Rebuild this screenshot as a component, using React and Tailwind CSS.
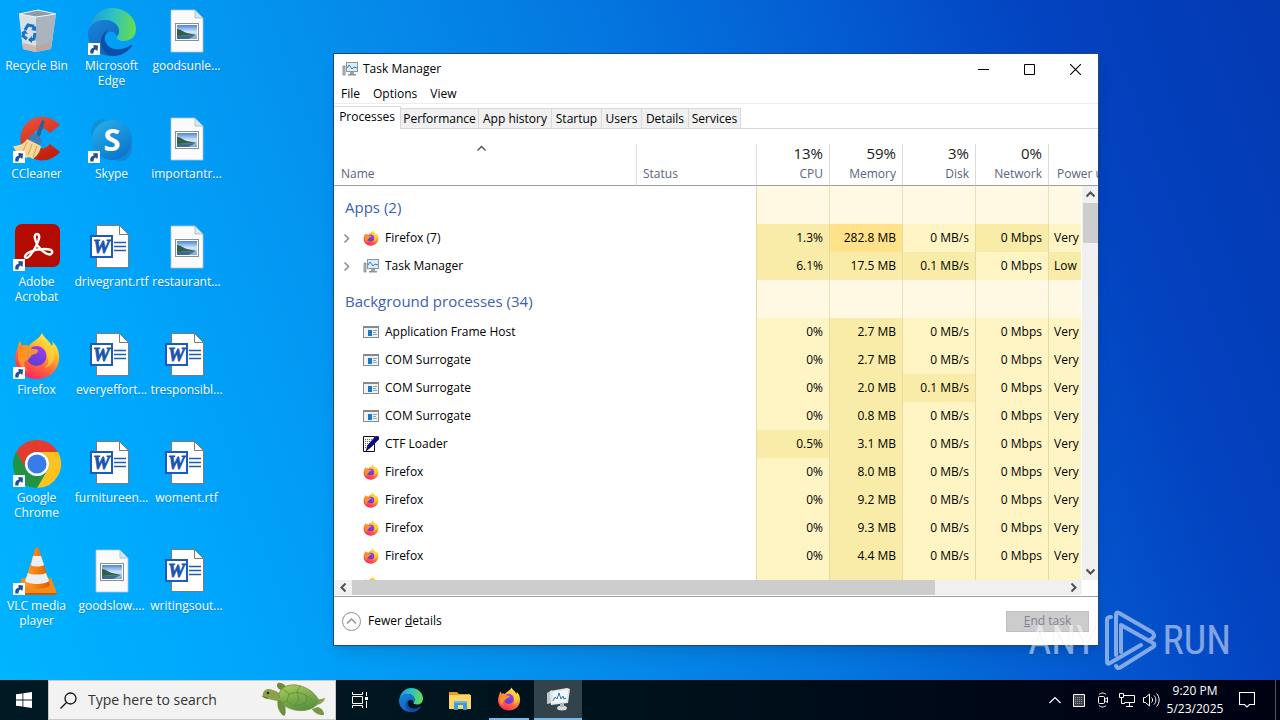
import { useState } from "react";

function Defs() {
  return (
    <svg className="absolute w-0 h-0" aria-hidden="true">
      <defs>
        <linearGradient id="fxBody" x1="0.8" y1="0" x2="0.25" y2="1">
          <stop offset="0.05" stopColor="#fff44f" />
          <stop offset="0.35" stopColor="#ffb52a" />
          <stop offset="0.6" stopColor="#ff7139" />
          <stop offset="0.85" stopColor="#ff3b52" />
          <stop offset="1" stopColor="#f0206b" />
        </linearGradient>
        <linearGradient id="fxGlobe" x1="0.7" y1="0" x2="0.3" y2="1">
          <stop offset="0" stopColor="#a03af0" />
          <stop offset="1" stopColor="#5a3fd0" />
        </linearGradient>
        <linearGradient id="fxHead" x1="0" y1="0" x2="1" y2="1">
          <stop offset="0" stopColor="#ff8a1e" />
          <stop offset="1" stopColor="#ffb030" />
        </linearGradient>
        <linearGradient id="edgeTop" x1="0" y1="0.4" x2="1" y2="0.5">
          <stop offset="0" stopColor="#2196dd" />
          <stop offset="0.45" stopColor="#2bc0c8" />
          <stop offset="1" stopColor="#66dd50" />
        </linearGradient>
        <linearGradient id="edgeLeft" x1="0" y1="0" x2="0.6" y2="1">
          <stop offset="0" stopColor="#1a86d8" />
          <stop offset="1" stopColor="#0f62bd" />
        </linearGradient>
        <linearGradient id="skypeBg" x1="0" y1="0" x2="0.6" y2="1">
          <stop offset="0" stopColor="#2ab1ea" />
          <stop offset="1" stopColor="#0a78cf" />
        </linearGradient>
        <linearGradient id="ccRed" x1="0" y1="0" x2="0.4" y2="1">
          <stop offset="0" stopColor="#f0543c" />
          <stop offset="1" stopColor="#c4200f" />
        </linearGradient>
        <linearGradient id="cone" x1="0" y1="0" x2="1" y2="0">
          <stop offset="0" stopColor="#f9a03a" />
          <stop offset="0.45" stopColor="#f58212" />
          <stop offset="1" stopColor="#d95e00" />
        </linearGradient>
        <linearGradient id="photoSky" x1="0" y1="0" x2="0" y2="1">
          <stop offset="0" stopColor="#4a86d8" />
          <stop offset="0.5" stopColor="#d5e8f6" />
          <stop offset="1" stopColor="#6fa6cf" />
        </linearGradient>
        <linearGradient id="shell" x1="0" y1="0" x2="0.4" y2="1">
          <stop offset="0" stopColor="#a9cf5c" />
          <stop offset="1" stopColor="#5c9440" />
        </linearGradient>
      </defs>
    </svg>
  );
}

function FirefoxIcon({ size = 48 }) {
  return (
    <svg width={size} height={size} viewBox="0 0 48 48">
      <path
        d="M29 1c2 5 7 7 10 13 1-2 1-3 0-5 5 5 8 11 7 19-1 11-10 19-22 19C11 47 2 38 2 26c0-5 2-8 3-12 0-2 1-4 3-5 0 2 0 3 1 5 2-1 5-1 7 0 3-5 10-6 13-13z"
        fill="url(#fxBody)"
      />
      <circle cx="23.500" cy="24" r="10" fill="url(#fxGlobe)" />
      <path
        d="M5 16c2-3 7-4 11-2 1 1 2 3 4 3 3 0 5 0 5 2s-3 3-6 4c-2 2-3 5-7 6-2 3 0 8 4 10C8 37 4 30 5 22z"
        fill="url(#fxHead)"
        opacity="0.9"
      />
      <path d="M27 12c5 2 8 7 7 13 3 4 1 9-3 11 8-2 12-9 10-17-1-4-5-7-7-11-1 3-3 4-7 4z" fill="#ffd43a" opacity="0.75" />
    </svg>
  );
}

function EdgeIcon({ size = 48 }) {
  return (
    <svg width={size} height={size} viewBox="0 0 48 48">
      <path
        d="M1 22C3 8 13 0 24 0c14 0 24 10 24 21 0 8-6 12-12 12-5 0-8-2-7-4 2-2 2-4 2-6 0-6-6-11-13-11C10 12 4 16 1 22z"
        fill="url(#edgeTop)"
      />
      <path
        d="M0 26c0-8 7-14 17-14 8 0 14 5 14 11 0 2-1 4-2 5-3-7-12-5-12 3 0 8 8 13 16 13-3 3-6 4-9 4C10 48 0 38 0 26z"
        fill="url(#edgeLeft)"
      />
      <path
        d="M21 21c-4 3-6 9-3 14 4 7 15 9 25 2 1 0 2 0 1 1-4 6-11 10-19 10-8-1-13-8-12-16 1-5 4-9 8-11z"
        fill="#0d4ea6"
      />
    </svg>
  );
}

function RecycleIcon() {
  return (
    <svg width="48" height="48" viewBox="0 0 48 48">
      <path d="M6 6l19-4 18 4-5 35-15 3-13-3z" fill="#c9d3da" />
      <path d="M6 6l17 3v35l-13-3z" fill="#d9e0e5" />
      <path d="M23 9l20-3-5 35-15 3z" fill="#aab4bd" />
      <path d="M6 6l19-4 18 4-20 3z" fill="#8e9aa5" stroke="#eef3f6" strokeWidth="1.200" />
      <path d="M10 35l13 3 15-3-1 6-14 3-13-3z" fill="#c99c8b" opacity="0.6" />
      <g fill="none" stroke="#1673c8" strokeWidth="3">
        <path d="M12 22l3-5 5 1 1 3" />
        <path d="M22 25l-1 6-4 1" />
        <path d="M14 31l-4-3 1-4" />
      </g>
      <path d="M18 22l5 1 0-5zM19 28l-4 4 4 3zM8 25l4-3 3 4z" fill="#1673c8" />
    </svg>
  );
}

function CCleanerIcon() {
  return (
    <svg width="48" height="48" viewBox="0 0 48 48">
      <path
        d="M47 9C37-2 20-2 12 9c-8 11-5 26 5 32 10 6 22 4 30-5L37 28c-4 5-10 6-14 2-5-5-4-13 1-16 4-3 9-2 13 3z"
        fill="url(#ccRed)"
      />
      <path d="M29 4l3 1-7 21-4-2z" fill="#2b5f97" />
      <path d="M17 19c4-2 10 0 12 5l-2 7-12-6z" fill="#3d7db8" />
      <path d="M14 23l14 7c-1 6-4 10-8 13l-4-2-3 1-4-4-5-1-4-7c6 0 11-2 14-7z" fill="#f6d89a" />
      <path d="M14 26l-4 9M19 28l-4 11M24 30l-4 11" stroke="#dcae62" strokeWidth="1.200" />
    </svg>
  );
}

function SkypeIcon() {
  return (
    <svg width="48" height="48" viewBox="0 0 48 48">
      <circle cx="15" cy="15" r="12" fill="#1190dc" />
      <circle cx="32" cy="33" r="12" fill="#1486d8" />
      <circle cx="24" cy="24" r="20" fill="url(#skypeBg)" />
      <text x="24" y="35" textAnchor="middle" fontFamily="Open Sans" fontWeight="700" fontSize="31" fill="#fff">
        S
      </text>
    </svg>
  );
}

function AcrobatIcon() {
  return (
    <svg width="48" height="48" viewBox="0 0 48 48">
      <rect x="2" y="0" width="45" height="43" rx="7" fill="#b30b00" />
      <path
        d="M12 33c0-4 9-8 19-8 6 0 9 1 8 4-2 4-10-1-14-7-3-5-5-12-1-12s2 7-2 14c-4 7-8 12-10 9z"
        fill="none"
        stroke="#fff"
        strokeWidth="2.400"
        strokeLinejoin="round"
      />
    </svg>
  );
}

function ChromeIcon() {
  return (
    <svg width="48" height="48" viewBox="0 0 48 48">
      <path d="M24 12h20.800A24 24 0 0 0 3.200 12l10.400 18A12 12 0 0 1 24 12z" fill="#e33b2e" />
      <path d="M44.800 12H24a12 12 0 0 1 10.400 18L24 48a24 24 0 0 0 20.800-36z" fill="#fcc31e" />
      <path d="M3.200 12A24 24 0 0 0 24 48l10.400-18a12 12 0 0 1-20.800 0z" fill="#229342" />
      <circle cx="24" cy="24" r="12" fill="#fff" />
      <circle cx="24" cy="24" r="9.600" fill="#3a7bea" />
    </svg>
  );
}

function VlcIcon() {
  return (
    <svg width="48" height="48" viewBox="0 0 48 48">
      <path d="M9 30h29l6 15c0 1-1 2-2 2H5c-1 0-2-1-1-2z" fill="#f48b1b" />
      <path d="M4 45h40c0 1-1 2-2 2H5z" fill="#c95c04" />
      <path d="M24 0c1 0 2 0 2 1l11 36c-3 5-22 5-26 0L22 1c0-1 1-1 2-1z" fill="url(#cone)" />
      <path d="M20 8h8l3 9c-3 2-11 2-13 0z" fill="#eceff1" />
      <path d="M15 25c4 2 14 2 18 0l3 8c-4 4-20 4-24 0z" fill="#eceff1" />
    </svg>
  );
}

function PhotoFileIcon() {
  return (
    <svg width="48" height="48" viewBox="0 0 48 48">
      <path d="M8 2h24l8 8v34H8z" fill="#fbfbfb" stroke="#b7c3cb" strokeWidth="0.800" />
      <path d="M32 2v8h8z" fill="#d6ebf7" stroke="#9db9c8" strokeWidth="0.800" />
      <rect x="12.500" y="15.500" width="23" height="17" fill="#fff" stroke="#8a8f96" />
      <rect x="14" y="17" width="20" height="14" fill="url(#photoSky)" />
      <path d="M14 21c4 0 6 3 10 4l9 2-19 1z" fill="#2f5f4a" />
      <path d="M14 28l19-1-8 4H14z" fill="#3b6a8a" />
    </svg>
  );
}

function WordFileIcon() {
  return (
    <svg width="48" height="48" viewBox="0 0 48 48">
      <path d="M8.500 1.500h23l9 9v33h-32z" fill="#fff" stroke="#7b7b7b" />
      <path d="M31.500 1.500v9h9z" fill="#fff" stroke="#7b7b7b" />
      <path d="M26 18.500h12M26 22.500h12M26 26.500h12" stroke="#1f5fae" strokeWidth="1.300" />
      <rect x="3" y="12" width="21" height="21" fill="#fff" stroke="#1a5bbd" strokeWidth="2" />
      <text
        x="13.500"
        y="29"
        textAnchor="middle"
        fontFamily="Liberation Serif"
        fontStyle="italic"
        fontWeight="700"
        fontSize="19"
        fill="#1a53b0"
        stroke="#1a53b0"
        strokeWidth="0.800"
      >
        W
      </text>
    </svg>
  );
}

function ShortcutArrow() {
  return (
    <svg className="absolute left-0 bottom-px" width="12" height="12" viewBox="0 0 12 12">
      <rect width="12" height="12" fill="#fff" />
      <path d="M2.500 10.500C1.500 7 3.500 5 5.500 5V2l4.500.500-.500 5.500-2-1.500C6 7 5.500 8.500 5.500 10.500z" fill="#1f4f92" />
    </svg>
  );
}

function TaskManagerIcon() {
  return (
    <svg width="16" height="16" viewBox="0 0 16 16">
      <path d="M1 5h2v9H1z" fill="#b8bcc0" stroke="#7f8589" strokeWidth="0.800" />
      <rect x="4.500" y="1.500" width="11" height="9" fill="#d8eefa" stroke="#8d969c" />
      <path d="M5 7l2-3 3 4 2-2 3 1" fill="none" stroke="#2c7fb4" />
      <path d="M8 11h4v2H8z" fill="#9ea4a8" />
      <path d="M6 13h8v1.500H6z" fill="#8d9397" />
    </svg>
  );
}

function AppWindowIcon() {
  return (
    <svg width="16" height="16" viewBox="0 0 16 16">
      <rect x="0.500" y="2.500" width="15" height="11" fill="#f1f1f1" stroke="#848a90" />
      <path d="M0 2h16v2H0z" fill="#848a90" />
      <path d="M5 6h4v6H5z" fill="#1b78c8" />
      <path d="M10 6.500h4M10 8.500h3M10 10.500h4" stroke="#7ea6c4" />
    </svg>
  );
}

function CtfIcon() {
  return (
    <svg width="16" height="16" viewBox="0 0 16 16">
      <path d="M.5.500h11v15H.5z" fill="#fff" stroke="#111" />
      <path d="M2 3.500h8M2 5.500h7M2 7.500h6M2 9.500h4M2 11.500h3" stroke="#666" strokeDasharray="1 1" />
      <path d="M13 0l3 1v2L8 11l-5 4 2-6z" fill="#0b0b8c" stroke="#000033" strokeWidth="0.600" />
    </svg>
  );
}

function Turtle() {
  return (
    <svg width="66" height="36" viewBox="0 0 66 36">
      <path d="M20 8c-4-1-5-5-3-7 4-1 9 3 9 7z" fill="#6e8a3a" />
      <path d="M57 25c5 2 6 5 6 8-5 1-11-3-12-6z" fill="#7b9642" />
      <path d="M54 18c4-1 8-1 10-2 0 3-4 6-8 7z" fill="#88a549" />
      <path d="M17 17c-2 6 1 14 6 17 3-1 1-9 1-14z" fill="#6f8e3e" />
      <path d="M2 11c1-4 6-5 10-3 4 1 7 3 9 7l-5 4c-3-1-6-1-9-2-3 0-6-2-5-6z" fill="#8aa24b" />
      <circle cx="7" cy="11" r="1.300" fill="#20240f" />
      <path d="M1 14c2 1 4 2 6 2" stroke="#5a6a2c" fill="none" />
      <path d="M18 12C20 4 30 1 40 4c9 3 15 8 18 15-3 8-14 11-24 9-9-2-16-7-16-16z" fill="url(#shell)" stroke="#6d9440" strokeWidth="0.800" />
      <g fill="none" stroke="#5f8c3b" strokeWidth="0.800">
        <path d="M22 7l6 5 8-2 9 3 7 6M28 12l-2 7 7 5 9-2 7 4M36 10l2 7-5 7M45 13l1 7-4 2M26 19l-5 2M36 10l3-6" />
      </g>
    </svg>
  );
}

function FolderIcon() {
  return (
    <svg width="24" height="24" viewBox="0 0 24 24">
      <path d="M1 4h8l2 2h11v15H1z" fill="#e5a019" />
      <path d="M1 7h22v14H1z" fill="#fcd667" />
      <path d="M6 13h13v9h-4v-5h-5v5H6z" fill="#3d9cd8" />
      <path d="M6 13h13v2H6z" fill="#64b9ec" />
    </svg>
  );
}

function TaskManagerLarge() {
  return (
    <svg width="24" height="24" viewBox="0 0 24 24">
      <path d="M1 6l5-3v13l-5 1z" fill="#c5c8ca" />
      <path d="M4 4l17-3 3 1-2 14-17 2z" fill="#e4e7e8" />
      <path d="M7 5l15-2-2 12-13 1z" fill="#f3f7f9" />
      <path d="M7 14l2-4 2 2 2-6 2 6 2-3 1 3 2-1" fill="none" stroke="#2a76ab" />
      <ellipse cx="16" cy="21" rx="5" ry="2.500" fill="#d5d8da" />
      <path d="M14 16h4v4h-4z" fill="#b5b9bc" />
    </svg>
  );
}

const desktopItems = [
  { label: "Recycle Bin", icon: RecycleIcon },
  { label: "CCleaner", icon: CCleanerIcon, shortcut: true },
  { label: "Adobe Acrobat", icon: AcrobatIcon, shortcut: true },
  { label: "Firefox", icon: FirefoxIcon, shortcut: true },
  { label: "Google Chrome", icon: ChromeIcon, shortcut: true },
  { label: "VLC media player", icon: VlcIcon, shortcut: true },
  { label: "Microsoft Edge", icon: EdgeIcon, shortcut: true },
  { label: "Skype", icon: SkypeIcon, shortcut: true },
  { label: "drivegrant.rtf", icon: WordFileIcon },
  { label: "everyeffort...", icon: WordFileIcon },
  { label: "furnitureen...", icon: WordFileIcon },
  { label: "goodslow....", icon: PhotoFileIcon },
  { label: "goodsunle...", icon: PhotoFileIcon },
  { label: "importantr...", icon: PhotoFileIcon },
  { label: "restaurant...", icon: PhotoFileIcon },
  { label: "tresponsibl...", icon: WordFileIcon },
  { label: "woment.rtf", icon: WordFileIcon },
  { label: "writingsout...", icon: WordFileIcon },
];

const tabs = [
  { name: "Performance", width: "w-[78px]" },
  { name: "App history", width: "w-[73px]" },
  { name: "Startup", width: "w-[50px]" },
  { name: "Users", width: "w-[40px]" },
  { name: "Details", width: "w-[47px]" },
  { name: "Services", width: "w-[52px]" },
];

const columns = [
  { total: "13%", name: "CPU" },
  { total: "59%", name: "Memory" },
  { total: "3%", name: "Disk" },
  { total: "0%", name: "Network" },
];

// heat: one digit for each of CPU, memory, disk, network and power
const groups = [
  {
    title: "Apps (2)",
    rows: [
      { name: "Firefox (7)", icon: "firefox", open: true, values: ["1.3%", "282.8 MB", "0 MB/s", "0 Mbps", "Very"], heat: "12010" },
      { name: "Task Manager", icon: "taskmgr", open: true, values: ["6.1%", "17.5 MB", "0.1 MB/s", "0 Mbps", "Low"], heat: "11101" },
    ],
  },
  {
    title: "Background processes (34)",
    rows: [
      { name: "Application Frame Host", icon: "window", values: ["0%", "2.7 MB", "0 MB/s", "0 Mbps", "Very"], heat: "01000" },
      { name: "COM Surrogate", icon: "window", values: ["0%", "2.7 MB", "0 MB/s", "0 Mbps", "Very"], heat: "01000" },
      { name: "COM Surrogate", icon: "window", values: ["0%", "2.0 MB", "0.1 MB/s", "0 Mbps", "Very"], heat: "01100" },
      { name: "COM Surrogate", icon: "window", values: ["0%", "0.8 MB", "0 MB/s", "0 Mbps", "Very"], heat: "01000" },
      { name: "CTF Loader", icon: "ctf", values: ["0.5%", "3.1 MB", "0 MB/s", "0 Mbps", "Very"], heat: "11000" },
      { name: "Firefox", icon: "firefox", values: ["0%", "8.0 MB", "0 MB/s", "0 Mbps", "Very"], heat: "01000" },
      { name: "Firefox", icon: "firefox", values: ["0%", "9.2 MB", "0 MB/s", "0 Mbps", "Very"], heat: "01000" },
      { name: "Firefox", icon: "firefox", values: ["0%", "9.3 MB", "0 MB/s", "0 Mbps", "Very"], heat: "01000" },
      { name: "Firefox", icon: "firefox", values: ["0%", "4.4 MB", "0 MB/s", "0 Mbps", "Very"], heat: "01000" },
      { name: "", icon: "firefox", values: ["", "", "", "", ""], heat: "01000" },
    ],
  },
];

const heatColors = {
  0: "bg-[#fff4c4]",
  1: "bg-[#f9eca8]",
  2: "bg-[#ffe28a]",
};

function RowIcon({ type }) {
  if (type === "firefox") return <FirefoxIcon size={16} />;
  if (type === "taskmgr") return <TaskManagerIcon />;
  if (type === "ctf") return <CtfIcon />;
  return <AppWindowIcon />;
}

function Chevron({ d, color = "#505050", width = 2 }) {
  return (
    <svg width="9" height="9" viewBox="0 0 9 9">
      <path d={d} fill="none" stroke={color} strokeWidth={width} />
    </svg>
  );
}

const UP = "M.5 6.500l4-4 4 4";
const DOWN = "M.5 2.500l4 4 4-4";
const LEFT = "M6.500.500l-4 4 4 4";
const RIGHT = "M2.500.500l4 4-4 4";

function ProcessTable() {
  return (
    <table className="w-full table-fixed border-separate border-spacing-0 mt-[15px]">
      <colgroup>
        <col className="w-[303px]" />
        <col className="w-[120px]" />
        <col className="w-[73px]" />
        <col className="w-[73px]" />
        <col className="w-[73px]" />
        <col className="w-[73px]" />
        <col />
      </colgroup>
      <thead>
        <tr className="h-[42px] text-left text-[#596480]">
          <th className="p-0 font-normal align-top border-r border-[#dcdcdc] border-b border-b-[#a0a0a0]">
            <div className="flex justify-center h-[21px] -ml-2">
              <Chevron d={UP} width={1.300} />
            </div>
            <div className="pl-[7px] leading-[18px]">Name</div>
          </th>
          <th className="p-0 pt-[21px] pl-[6px] leading-[18px] font-normal align-top border-r border-[#dcdcdc] border-b border-b-[#a0a0a0]">
            Status
          </th>
          {columns.map((c) => (
            <th
              key={c.name}
              className="p-0 pr-[6px] font-normal text-right align-top border-r border-[#dcdcdc] border-b border-b-[#a0a0a0]"
            >
              <div className="text-[15px] leading-[18px] pb-[3px] text-[#1a1a1a]">{c.total}</div>
              <div className="leading-[18px]">{c.name}</div>
            </th>
          ))}
          <th className="p-0 pt-[21px] pl-2 leading-[18px] font-normal align-top whitespace-nowrap border-b border-b-[#a0a0a0]">
            Power usage
          </th>
        </tr>
      </thead>
      {groups.map((g) => (
        <tbody key={g.title}>
          <tr className="h-[38px]">
            <th colSpan={2} className="p-0 pl-[11px] pb-1 font-normal text-left text-[15px] text-[#3a61b5] pt-2 leading-[26px] border-r border-[#e6d9a2]">
              {g.title}
            </th>
            {columns.map((c) => (
              <td key={c.name} className="p-0 bg-[#fff9e3] border-r border-[#e9dfb8]" />
            ))}
            <td className="p-0 bg-[#fff9e3]" />
          </tr>
          {g.rows.map((r, idx) => (
            <tr key={idx} className="h-7">
              <td className="p-0">
                <div className="flex items-center h-7 pl-2">
                  <span className="w-[21px] flex">{r.open && <Chevron d={RIGHT} color="#8c8c8c" width={1.500} />}</span>
                  <RowIcon type={r.icon} />
                  <span className="pl-[6px]">{r.name}</span>
                </div>
              </td>
              <td className="p-0 border-r border-[#e6d9a2]" />
              {r.values.map((v, i) => (
                <td
                  key={i}
                  className={`p-0 whitespace-nowrap ${heatColors[r.heat[i]]} ${
                    i < 4 ? "pr-[6px] text-right border-r border-[#e6d9a2]" : "pl-[5px]"
                  }`}
                >
                  {v}
                </td>
              ))}
            </tr>
          ))}
        </tbody>
      ))}
    </table>
  );
}

function TaskManagerWindow() {
  const [active, setActive] = useState("Processes");

  return (
    <section className="absolute left-[333px] top-[53px] bottom-[34px] w-[766px] flex flex-col bg-white border border-[#1b4a78] text-xs text-black shadow-lg overflow-hidden">
      <header className="flex items-center h-[30px] shrink-0 pl-2">
        <TaskManagerIcon />
        <h1 className="pl-[5px] flex-1">Task Manager</h1>
        <button aria-label="Minimize" className="w-[46px] h-full grid place-items-center">
          <svg width="11" height="11" viewBox="0 0 11 11"><path d="M0 5.500h11" stroke="#000" /></svg>
        </button>
        <button aria-label="Maximize" className="w-[46px] h-full grid place-items-center">
          <svg width="11" height="11" viewBox="0 0 11 11"><path d="M.5.500h10v10H.5z" fill="none" stroke="#000" /></svg>
        </button>
        <button aria-label="Close" className="w-[46px] h-full grid place-items-center">
          <svg width="11" height="11" viewBox="0 0 11 11"><path d="M0 0l11 11M11 0L0 11" stroke="#000" strokeWidth="1.100" /></svg>
        </button>
      </header>

      <nav className="flex gap-[13px] h-5 shrink-0 pl-[7px] border-b border-[#ececec]">
        <button>File</button>
        <button>Options</button>
        <button>View</button>
      </nav>

      <div role="tablist" className="flex items-end h-[25px] shrink-0 border-b border-[#d9d9d9]">
        <button
          role="tab"
          aria-selected={active === "Processes"}
          onClick={() => setActive("Processes")}
          className="w-[67px] h-[23px] -mb-px pb-[2px] bg-white border-r border-t border-[#d9d9d9] whitespace-nowrap"
        >
          Processes
        </button>
        {tabs.map((t) => (
          <button
            key={t.name}
            role="tab"
            aria-selected={active === t.name}
            onClick={() => setActive(t.name)}
            className={`${t.width} h-5 flex justify-center items-center bg-[#f0f0f0] border-r border-t border-[#d9d9d9] whitespace-nowrap`}
          >
            {t.name}
          </button>
        ))}
      </div>

      <div className="relative flex-1 min-h-0 overflow-hidden">
        <ProcessTable />
        {/* vertical scroll bar */}
        <div className="absolute right-0 top-[57px] bottom-0 w-[17px] flex flex-col items-center bg-[#f0f0f0] border-l border-white">
          <button aria-label="Scroll up" className="h-[17px] grid place-items-center"><Chevron d={UP} /></button>
          <div className="w-[15px] h-10 bg-[#cdcdcd]" />
          <div className="flex-1" />
          <button aria-label="Scroll down" className="h-[17px] grid place-items-center"><Chevron d={DOWN} /></button>
        </div>
      </div>

      <div className="flex items-start h-[17px] shrink-0 pr-4 border-b border-[#a0a0a0]">
        <button aria-label="Scroll left" className="w-[18px] h-[15px] grid place-items-center bg-[#f0f0f0]"><Chevron d={LEFT} /></button>
        <div className="flex-1 h-[15px] flex bg-[#f0f0f0]">
          <div className="w-9/11 bg-[#cdcdcd]" />
        </div>
        <button aria-label="Scroll right" className="w-[18px] h-[15px] grid place-items-center bg-[#f0f0f0]"><Chevron d={RIGHT} /></button>
      </div>

      <footer className="flex items-center justify-between h-12 shrink-0 pl-2 pr-[9px]">
        <button className="flex items-center gap-[7px]">
          <svg width="19" height="19" viewBox="0 0 19 19" fill="none" stroke="#8f8f8f">
            <circle cx="9.500" cy="9.500" r="9" />
            <path d="M5 11.500l4.500-4.500 4.500 4.500" strokeWidth="1.400" />
          </svg>
          <span>Fewer <u>d</u>etails</span>
        </button>
        <button disabled className="w-[83px] h-[21px] bg-[#cccccc] border border-[#bfbfbf] text-[#838398]">
          <u>E</u>nd task
        </button>
      </footer>
    </section>
  );
}

function Watermark() {
  return (
    <div className="absolute right-[49px] bottom-2 flex items-center gap-[6px] text-white opacity-50 pointer-events-none">
      <span className="font-['Roboto_Condensed','Liberation_Sans_Narrow','Roboto',sans-serif] text-[40px] leading-none text-shadow-xs">ANY</span>
      <svg width="54" height="62" viewBox="0 0 54 62" fill="none" stroke="currentColor" strokeWidth="4" strokeLinejoin="round" strokeLinecap="round">
        <path d="M8 7c-3 0-4 1-4 3v42c0 2 1 2 3 1l31-18" />
        <path d="M13 45V5c0-2 1-3 3-2l33 19c3 2 3 5-1 7" />
        <path d="M18 42V15l32 18c2 1 2 3 0 4L18 57c-3 2-4 1-5-1" />
      </svg>
      <span className="font-['Roboto_Condensed','Liberation_Sans_Narrow','Roboto',sans-serif] text-[40px] leading-none">RUN</span>
    </div>
  );
}

function Taskbar() {
  return (
    <footer className="flex h-10 shrink-0 text-white text-xs bg-linear-to-r from-[#001a24] via-[#00121c] to-[#000212]">
      <button aria-label="Start" className="w-12 grid place-items-center">
        <svg width="16" height="16" viewBox="0 0 16 16" fill="#fff">
          <path d="M0 2.300L6.500 1.400v6.200H0zM7.300 1.300L16 0v7.600H7.300zM0 8.400h6.500v6.200L0 13.700zM7.300 8.400H16V16l-8.700-1.300z" />
        </svg>
      </button>
      <label className="flex items-center w-72 bg-[#f2f2f2] border border-[#c8c8c8] pl-[11px] pr-2">
        <svg width="17" height="17" viewBox="0 0 17 17" fill="none" stroke="#111" strokeWidth="1.300">
          <circle cx="10.500" cy="6.500" r="5.500" />
          <path d="M6.500 10.500L0.500 16.500" />
        </svg>
        <input
          type="text"
          aria-label="Search"
          placeholder="Type here to search"
          className="flex-1 min-w-0 ml-[11px] text-sm outline-none text-black placeholder:text-[#333333]"
        />
        <Turtle />
      </label>
      <button aria-label="Task View" className="w-12 grid place-items-center">
        <svg width="18" height="18" viewBox="0 0 18 18" fill="none" stroke="#fff">
          <path d="M1.500 1v2.500h10V1M1.500 17v-2.500h10V17M1.500 5.500h10v7h-10zM15.500 1v4M15.500 10v7" />
          <path d="M14 6h3v3h-3z" fill="#fff" stroke="none" />
        </svg>
      </button>
      <div className="flex gap-px ml-[3px]">
        <button aria-label="Edge" className="w-12 grid place-items-center"><EdgeIcon size={24} /></button>
        <button aria-label="File Explorer" className="w-12 grid place-items-center"><FolderIcon /></button>
        <button aria-label="Firefox" className="w-12 flex flex-col items-center">
          <span className="flex-1 flex items-center"><FirefoxIcon size={24} /></span>
          <span className="w-10 h-[2px] bg-[#76b9ed]" />
        </button>
        <button aria-label="Task Manager" className="w-12 flex flex-col items-center bg-[#33434c]">
          <span className="flex-1 flex items-center"><TaskManagerLarge /></span>
          <span className="w-12 h-[2px] bg-[#76b9ed]" />
        </button>
      </div>

      <div className="flex items-center ml-auto">
        <button aria-label="Show hidden icons" className="w-6 grid place-items-center">
          <svg width="12" height="8" viewBox="0 0 12 8" fill="none" stroke="#fff" strokeWidth="1.200"><path d="M0.500 7L6 1.500 11.500 7" /></svg>
        </button>
        <span className="w-6 grid place-items-center">
          <svg width="12" height="13" viewBox="0 0 12 13">
            <path d="M.5.500h11v12H.5z" fill="#3a4048" stroke="#fff" />
            <path d="M2 3.500h8M2 5.500h8M2 7.500h8M2 9.500h8" stroke="#9a9fa6" strokeDasharray="1 1" />
          </svg>
        </span>
        <span className="w-6 grid place-items-center">
          <svg width="12" height="16" viewBox="0 0 12 16" fill="none" stroke="#fff">
            <rect x="1.500" y="4.500" width="6" height="7" rx="1" />
            <path d="M7.500 7.500l3-2v5l-3-2M2 2.500c2-2 5-2 7 0M2 13.500c2 2 5 2 7 0" />
          </svg>
        </span>
        <span className="w-6 grid place-items-center">
          <svg width="16" height="14" viewBox="0 0 16 14" fill="none" stroke="#fff">
            <path d="M5 2.500h10.500v7H5.500M10.500 10v3M7 13.500h7M.5.500h4v4h-4zM2.500 5v5.500H6" />
          </svg>
        </span>
        <span className="w-6 grid place-items-center">
          <svg width="17" height="14" viewBox="0 0 17 14" fill="none" stroke="#fff">
            <path d="M.5 4.500h2l4-3.500v12l-4-3.500h-2zM8.500 4.500c1.500 1.500 1.500 3.500 0 5M11 2.500c2.500 2.500 2.500 6.500 0 9M13.500.500c3.500 3.500 3.500 9.500 0 13" />
          </svg>
        </span>
        <div className="w-16 text-center leading-[18px] whitespace-nowrap">
          <div>9:20 PM</div>
          <div>5/23/2025</div>
        </div>
        <button aria-label="Notifications" className="w-10 grid place-items-center">
          <svg width="16" height="16" viewBox="0 0 16 16" fill="none" stroke="#fff" strokeWidth="1.100">
            <path d="M.5.500h15v12h-5L8 15l-2.500-2.500h-5z" />
          </svg>
        </button>
        <button aria-label="Show desktop" className="ml-2 w-[5px] h-10 border-l border-[#50555c]" />
      </div>
    </footer>
  );
}

export default function App() {
  return (
    <div className="flex flex-col h-screen overflow-hidden font-['Open_Sans','Noto_Sans',sans-serif] select-none">
      <Defs />
      <main className="relative flex-1 min-h-0 bg-[linear-gradient(70deg,#00b4ff_0%,#00a6fc_16%,#058eec_37%,#0478e0_54%,#045cd2_70%,#0342c0_84%,#043ab2_100%)]">
        <div className="-ml-px inline-grid grid-flow-col grid-rows-[repeat(6,108px)] auto-cols-[75px]">
          {desktopItems.map(({ label, icon: Icon, shortcut }) => (
            <button key={label} className="flex flex-col items-center pt-2">
              <span className="relative">
                <Icon />
                {shortcut && <ShortcutArrow />}
              </span>
              <span className="mt-[2px] px-1 text-xs leading-[15px] text-white text-shadow-xs">{label}</span>
            </button>
          ))}
        </div>
        <TaskManagerWindow />
        <Watermark />
      </main>
      <Taskbar />
    </div>
  );
}
